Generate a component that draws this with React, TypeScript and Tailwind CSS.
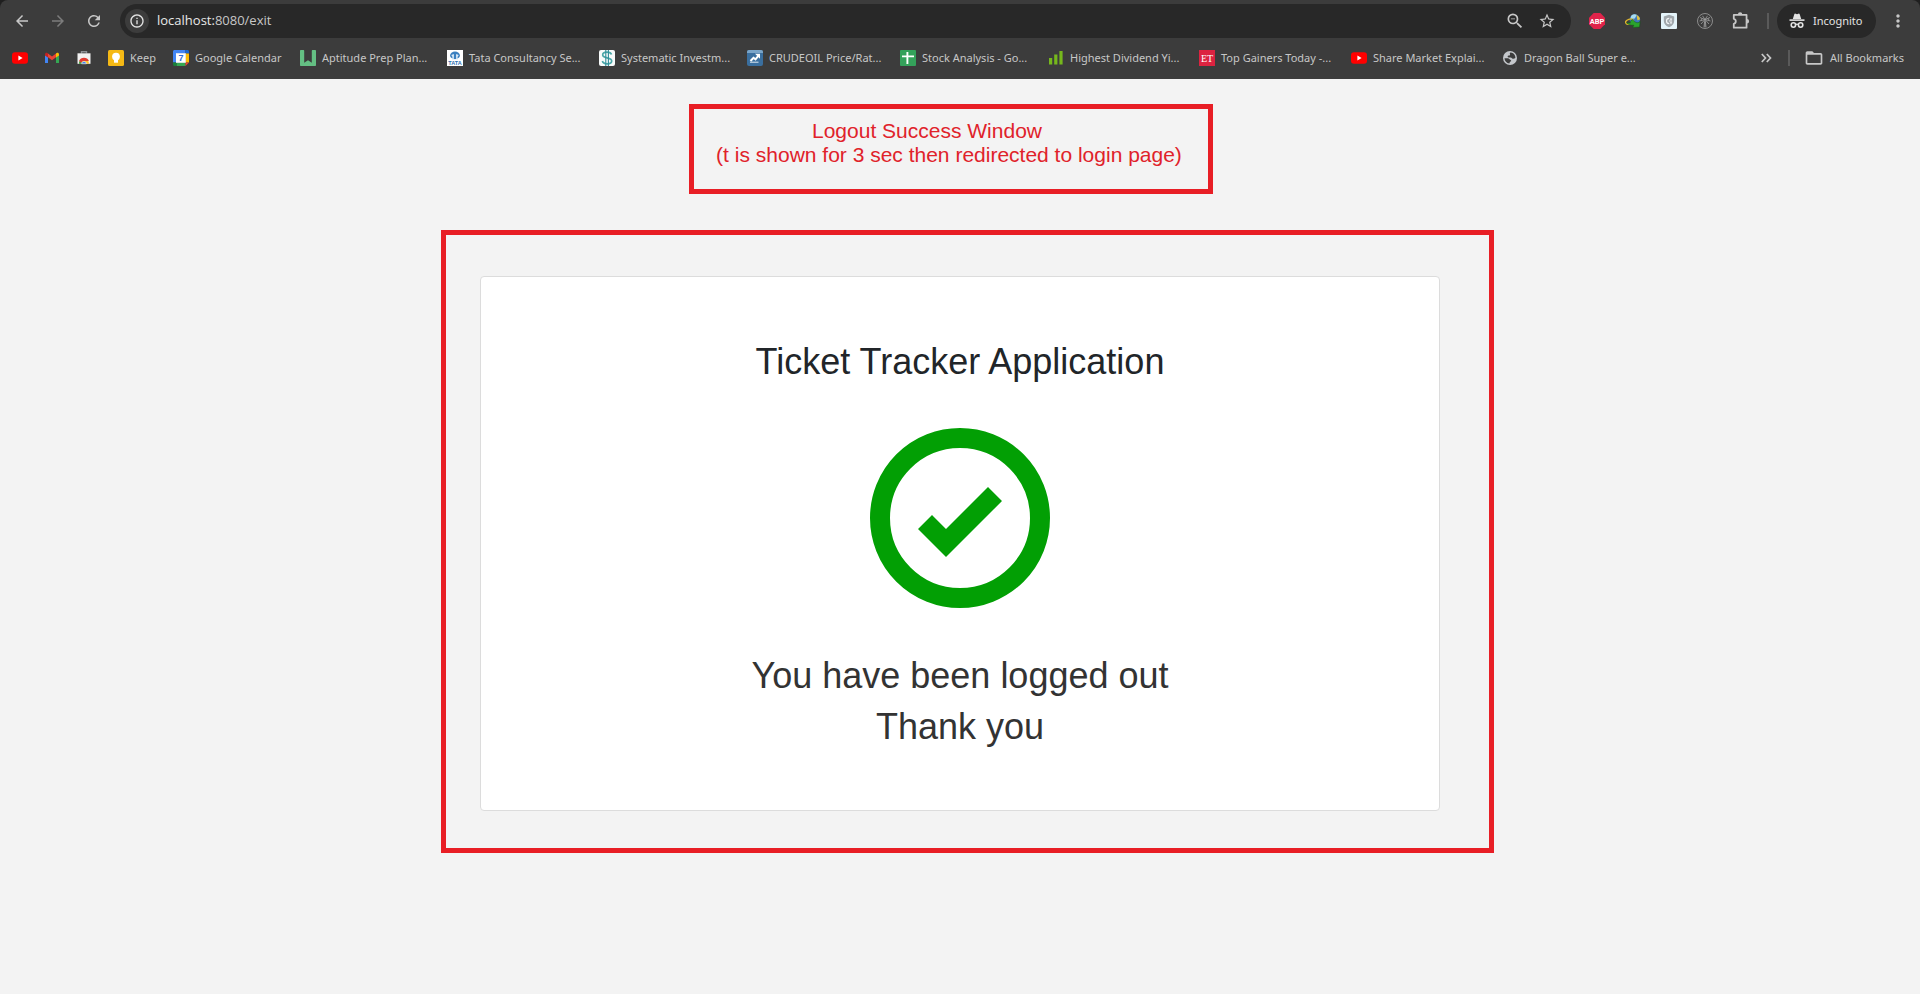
import type { ReactNode } from "react";
import {
  MdArrowBack,
  MdArrowForward,
  MdFolderOpen,
  MdInfoOutline,
  MdMoreVert,
  MdRefresh,
  MdStarBorder,
  MdZoomOut,
} from "react-icons/md";

function YouTubeIcon() {
  return (
    <svg viewBox="0 0 16 16" className="size-4 shrink-0" aria-hidden="true">
      <rect x="0" y="2.2" width="16" height="11.6" rx="3" fill="#ff0000" />
      <path d="M6.4 5.6 10.6 8l-4.2 2.4z" fill="#fff" />
    </svg>
  );
}

function GmailIcon() {
  return (
    <svg viewBox="0 0 16 16" className="size-4 shrink-0" aria-hidden="true">
      <path d="M1 4.6V13h3V7.2z" fill="#4285f4" />
      <path d="M12 7.2V13h3V4.6z" fill="#34a853" />
      <path d="M4 3.4v3.9l4 3 4-3V3.4l-4 3z" fill="#ea4335" />
      <path d="M1 4.4v1L4 7.6V3.4l-.6-.4C2.3 2.3 1 3 1 4.4z" fill="#c5221f" />
      <path d="M15 4.4v1l-3 2.2V3.400l.6-.4c1.100-.7 2.400 0 2.400 1.400z" fill="#fbbc04" />
    </svg>
  );
}

function WebStoreIcon() {
  return (
    <svg viewBox="0 0 16 16" className="size-4 shrink-0" aria-hidden="true">
      <path d="M5.500 3.500V1.700h5v1.800" fill="none" stroke="#8d9196" strokeWidth="1.400" />
      <path d="M1.500 3.300h13v10.500h-13z" fill="#f1f1f1" />
      <path d="M3 13.800a5 5 0 0 1 10 0z" fill="#fbc02d" />
      <path d="M3 13.800A5 5 0 0 1 4 10.400l2.500 3.400z" fill="#2e9e4f" />
      <path d="M3.100 11A5.300 5.300 0 0 1 12.900 11H8c-1.800 0-2.600 1.200-2.600 2z" fill="#df3b32" />
      <path d="M5.600 13.800a2.400 2.400 0 0 1 4.800 0z" fill="#3f7fe8" stroke="#fff" strokeWidth=".5" />
    </svg>
  );
}

function KeepIcon() {
  return (
    <svg viewBox="0 0 16 16" className="size-4 shrink-0" aria-hidden="true">
      <rect width="16" height="16" rx="1.500" fill="#f5b915" />
      <circle cx="8" cy="6.600" r="3.900" fill="#fff" />
      <path d="M6 9.500h4v3.200H6z" fill="#fff" />
    </svg>
  );
}

function CalendarIcon() {
  return (
    <svg viewBox="0 0 16 16" className="size-4 shrink-0" aria-hidden="true">
      <path d="M1.500 0h11v3.500H3.500v9H0V1.500C0 .7.7 0 1.500 0z" fill="#4285f4" />
      <path d="M12.500 0h2C15.300 0 16 .7 16 1.500v2h-3.500z" fill="#1967d2" />
      <path d="M12.500 3.500H16v9h-3.500z" fill="#fbbc04" />
      <path d="M3.500 12.500h9V16h-9z" fill="#34a853" />
      <path d="M0 12.500h3.500V16h-2C.7 16 0 15.300 0 14.500z" fill="#188038" />
      <path d="M12.500 12.500H16L12.500 16z" fill="#ea4335" />
      <path d="M3 3.200h9.800v9.600H3z" fill="#fff" />
      <text x="8" y="11.200" textAnchor="middle" fontSize="9" fontWeight="700" fontFamily="Liberation Sans, sans-serif" fill="#2c6bd8">
        7
      </text>
    </svg>
  );
}

function PrepIcon() {
  return (
    <svg viewBox="0 0 16 16" className="size-4 shrink-0" aria-hidden="true">
      <path
        d="M1 0h2.200c.6 0 1 .4 1 1v11.700L8 10.200l3.800 2.500V1c0-.6.4-1 1-1H15c.6 0 1 .4 1 1v14c0 .6-.4 1-1 1H1c-.6 0-1-.4-1-1V1c0-.6.4-1 1-1z"
        fill="#64bf83"
      />
    </svg>
  );
}

function TataIcon() {
  return (
    <svg viewBox="0 0 16 16" className="size-4 shrink-0" aria-hidden="true">
      <rect width="16" height="16" fill="#fff" />
      <ellipse cx="8" cy="5.400" rx="4.900" ry="3.800" fill="#3a7fc0" />
      <path d="M4.200 5.200c1.300-.9 2.300-1 2.800-.9l-.2 5.100H5c.8-1.500.6-3.200-.8-4.200zM11.800 5.200c-1.300-.9-2.300-1-2.800-.9l.2 5.100H11c-.8-1.500-.6-3.200.8-4.200z" fill="#d8e8f6" />
      <text x="8" y="14.800" textAnchor="middle" fontSize="5.500" fontWeight="700" fontFamily="Liberation Sans, sans-serif" fill="#2b6fb3">
        TATA
      </text>
    </svg>
  );
}

function DollarIcon() {
  return (
    <svg viewBox="0 0 16 16" className="size-4 shrink-0" aria-hidden="true">
      <rect width="16" height="16" rx="2" fill="#f7fafa" />
      <path d="M12.500 4.500C12 2.800 10 2.200 8 2.200c-2.400 0-4.300 1-4.300 2.800C3.700 8.800 12.700 7 12.700 11c0 1.800-2 2.800-4.500 2.800-2.400 0-4.400-.9-4.800-2.800" fill="none" stroke="#4aa7a8" strokeWidth="1.700" />
      <path d="M6.800 0v16M9.400 0v16" stroke="#2f8c99" strokeWidth="1.100" />
    </svg>
  );
}

function TrendIcon() {
  return (
    <svg viewBox="0 0 16 16" className="size-4 shrink-0" aria-hidden="true">
      <rect width="16" height="16" rx="2" fill="#3a6f9f" />
      <path d="M2 0h12a2 2 0 0 1 2 2v1H0V2a2 2 0 0 1 2-2z" fill="#7aa5c9" />
      <path d="m3.500 11 3-3.200 2 1.500 3-3.600" fill="none" stroke="#fff" strokeWidth="2" />
      <path d="M8 3.800h5v5z" fill="#fff" />
      <path d="M3 12.200h8.500" stroke="#dce8f2" strokeWidth="1" />
    </svg>
  );
}

function SheetIcon() {
  return (
    <svg viewBox="0 0 16 16" className="size-4 shrink-0" aria-hidden="true">
      <rect width="16" height="16" rx="1" fill="#34a15a" />
      <path d="M7.400 2v12M2 6.400h12" stroke="#fff" strokeWidth="1.900" />
    </svg>
  );
}

function BarsIcon() {
  return (
    <svg viewBox="0 0 16 16" className="size-4 shrink-0" aria-hidden="true">
      <path d="M1 8h3.200v6.500H1zM6.200 4.500h3.200v10H6.200zM11.400 1h3.200v13.500h-3.200z" fill="#76b81c" />
    </svg>
  );
}

function EtIcon() {
  return (
    <svg viewBox="0 0 16 16" className="size-4 shrink-0" aria-hidden="true">
      <rect width="16" height="16" fill="#dc2340" />
      <text x="8" y="11.700" textAnchor="middle" fontSize="10" fontFamily="Liberation Serif, serif" fill="#fff">
        ET
      </text>
    </svg>
  );
}

function GlobeIcon() {
  return (
    <svg viewBox="0 0 16 16" className="size-4 shrink-0" aria-hidden="true">
      <circle cx="8" cy="8" r="7" fill="#c4c7cb" />
      <path d="M8.600 2.500c1.800.2 3.300 1 4.200 2.700.4.900.6 1.800.6 2.800-1 .5-1.600.9-2.600.7-1-.2-1.100-1.200-2.100-1.300H6.500c-1.200-.3-1.200-1.700.3-1.800 1 0 1.500-.7 1.200-1.300-.4-.7-.2-1.500.6-1.800z" fill="#3c3c3c" />
      <path d="M2.500 8.200h3.300c1.500.1 1.700 1.300 2.800 1.700.9.400.7 1.400 0 1.700-.9.400-.8 1.200-1.200 1.900-2.800-.4-4.800-2.500-4.900-5.300z" fill="#3c3c3c" />
    </svg>
  );
}

function AbpIcon() {
  return (
    <svg viewBox="0 0 16 16" className="size-4" aria-hidden="true">
      <path d="M4.700 0h6.600L16 4.700v6.600L11.300 16H4.700L0 11.300V4.700z" fill="#e0234a" />
      <text x="8" y="10.700" textAnchor="middle" fontSize="7.500" fontWeight="700" fontFamily="Roboto, sans-serif" fill="#fff">
        ABP
      </text>
    </svg>
  );
}

function DownloadManagerIcon() {
  return (
    <svg viewBox="0 0 16 16" className="size-4" aria-hidden="true">
      <circle cx="9.800" cy="6.600" r="5.300" fill="#3e78bd" />
      <path d="M6.200 2.700a5.300 5.300 0 0 1 5.600-1L9.800 5.400 5.500 6z" fill="#a6dcf2" />
      <path d="M11.500 2c2 .9 3.400 2.600 3.500 4.300l-2.500 1.200z" fill="#e3c33c" />
      <ellipse cx="4.500" cy="8.600" rx="4" ry="2.400" transform="rotate(-18 4.500 8.600)" fill="none" stroke="#e0b52c" strokeWidth="1.400" />
      <path d="M1.500 9.800c1.500 1.500 4.500 2.800 7.400 2.400L7.600 14.400l6.900-.3.700-5.600-2.200 1.300C10.500 9.600 8.500 8 7.600 6.500 5.500 7.500 5 9 5.500 10z" fill="#2ba32d" stroke="#14541a" strokeWidth=".5" />
    </svg>
  );
}

function ShieldIcon() {
  return (
    <svg viewBox="0 0 16 16" className="size-4" aria-hidden="true">
      <rect width="16" height="16" rx="1" fill="#e4f4fa" />
      <path d="M8 1.800 13.200 3.400v4.300c0 3.200-2.200 5.300-5.200 6.600-3-1.300-5.200-3.400-5.200-6.600V3.400z" fill="#a0a7ac" />
      <path d="M8.200 5.300a2.700 2.700 0 1 0 0 5.400M8 8h3M9 6.200h2M9 9.800h2" fill="none" stroke="#f2f5f6" strokeWidth="1.200" />
    </svg>
  );
}

function PalmIcon() {
  return (
    <svg viewBox="0 0 16 16" className="size-4" aria-hidden="true" fill="none" stroke="#a0a0a0" strokeWidth=".8">
      <circle cx="8" cy="8" r="7.500" />
      <path d="M8 6.500v8M7 14.300l.6-6M9 14.300l-.6-6M8 6.500 5.500 2.800M8 6.500l2.500-3.700M8 6.500 3 4.500M8 6.500l5-2M8 6.500 2.500 8M8 6.500 13.500 8M8 6.500 4 11M8 6.500l4 4.500M4.500 5.500l-.3 2M11.500 5.500l.3 2" />
    </svg>
  );
}

function PuzzleIcon() {
  return (
    <svg viewBox="0 0 18 18" className="size-5" aria-hidden="true">
      <path d="M2.500 3.500H14v11.500H2.500v-3.500a2.300 2.300 0 0 0 0-4.500z" fill="none" stroke="#c7c7c7" strokeWidth="1.600" strokeLinejoin="round" />
      <path d="M6.200 3.200a2 2 0 0 1 4 0zM14.300 7.200a2 2 0 0 1 0 4z" fill="#c7c7c7" />
    </svg>
  );
}

function IncognitoIcon() {
  return (
    <svg viewBox="0 0 16 16" className="size-4" aria-hidden="true">
      <path d="M5.300 1.200c.2-.5.700-.7 1.200-.5L8 1.200l1.500-.5c.5-.2 1 0 1.200.5L12.200 6H3.800z" fill="#e3e3e3" />
      <path d="M.5 6.300h15v1.600H.5z" fill="#e3e3e3" />
      <circle cx="4.400" cy="12" r="2.200" fill="none" stroke="#e3e3e3" strokeWidth="1.600" />
      <circle cx="11.600" cy="12" r="2.200" fill="none" stroke="#e3e3e3" strokeWidth="1.600" />
      <path d="M6.400 11.600c1-.7 2.200-.7 3.200 0" fill="none" stroke="#e3e3e3" strokeWidth="1.300" />
    </svg>
  );
}

function OverflowIcon() {
  return (
    <svg viewBox="0 0 12 12" className="size-3" aria-hidden="true">
      <path d="m1.800 2 3.700 4-3.700 4M6.800 2l3.700 4-3.700 4" fill="none" stroke="#c7c7c7" strokeWidth="1.700" />
    </svg>
  );
}

function SuccessIcon() {
  return (
    <svg viewBox="0 0 180 180" className="size-[180px]" role="img" aria-label="Success">
      <circle cx="90" cy="90" r="80" fill="none" stroke="#029f04" strokeWidth="20" />
      <path d="M48 101 62 87l14 14 42-42 14 14-56 56z" fill="#029f04" />
    </svg>
  );
}

type Bookmark = { label: string; text?: string; icon: ReactNode; width: string };

const bookmarks: Bookmark[] = [
  { label: "YouTube", icon: <YouTubeIcon />, width: "w-8" },
  { label: "Gmail", icon: <GmailIcon />, width: "w-8" },
  { label: "Web Store", icon: <WebStoreIcon />, width: "w-8" },
  { label: "Keep", text: "Keep", icon: <KeepIcon />, width: "w-[65px]" },
  { label: "Google Calendar", text: "Google Calendar", icon: <CalendarIcon />, width: "w-[127px]" },
  { label: "Aptitude Prep", text: "Aptitude Prep Plan...", icon: <PrepIcon />, width: "w-[147px]" },
  { label: "Tata Consultancy", text: "Tata Consultancy Se...", icon: <TataIcon />, width: "w-[152px]" },
  { label: "Systematic", text: "Systematic Investm...", icon: <DollarIcon />, width: "w-[148px]" },
  { label: "Crude oil", text: "CRUDEOIL Price/Rat...", icon: <TrendIcon />, width: "w-[153px]" },
  { label: "Stock Analysis", text: "Stock Analysis - Go...", icon: <SheetIcon />, width: "w-[148px]" },
  { label: "Highest Dividend", text: "Highest Dividend Yi...", icon: <BarsIcon />, width: "w-[151px]" },
  { label: "Top Gainers", text: "Top Gainers Today -...", icon: <EtIcon />, width: "w-[152px]" },
  { label: "Share Market", text: "Share Market Explai...", icon: <YouTubeIcon />, width: "w-[151px]" },
  { label: "Dragon Ball", text: "Dragon Ball Super e...", icon: <GlobeIcon />, width: "w-[152px]" },
];

function ToolButton({ label, children }: { label: string; children: ReactNode }) {
  return (
    <button type="button" aria-label={label} className="flex h-[34px] w-9 shrink-0 items-center justify-center">
      {children}
    </button>
  );
}

function BrowserBar() {
  return (
    <header className="bg-[#1f1f1f] font-['Noto_Sans','Open_Sans',sans-serif]">
      <div className="h-[79px] rounded-t-lg bg-[#3c3c3c] pt-1 text-[#c7c7c7]">
        <div className="flex items-center px-1">
          <ToolButton label="Back">
            <MdArrowBack className="size-[18px]" />
          </ToolButton>
          <ToolButton label="Forward">
            <MdArrowForward className="size-[18px] text-[#7c7c7c]" />
          </ToolButton>
          <ToolButton label="Reload">
            <MdRefresh className="size-[18px]" />
          </ToolButton>
          <div className="ml-2 flex h-[34px] flex-1 items-center rounded-full bg-[#282828] pr-2 pl-[5px]">
            <button type="button" aria-label="Site information" className="flex size-6 items-center justify-center rounded-full bg-[#3c3c3c]">
              <MdInfoOutline className="size-4 text-[#e3e3e3]" />
            </button>
            <a href="#exit" className="ml-2 flex-1 font-['Open_Sans',sans-serif] text-[13px] text-[#c7c7c7]">
              <span className="text-[#e8e8e8]">localhost:</span>8080/exit
            </a>
            <button type="button" aria-label="Zoom" className="flex w-8 justify-center">
              <MdZoomOut className="size-5" />
            </button>
            <button type="button" aria-label="Bookmark this tab" className="flex w-8 justify-center">
              <MdStarBorder className="size-[18px]" />
            </button>
          </div>
          <div className="ml-2 flex items-center">
            <ToolButton label="Ad blocker"><AbpIcon /></ToolButton>
            <ToolButton label="Download manager"><DownloadManagerIcon /></ToolButton>
            <ToolButton label="Shield"><ShieldIcon /></ToolButton>
            <ToolButton label="Palm"><PalmIcon /></ToolButton>
            <ToolButton label="Extensions"><PuzzleIcon /></ToolButton>
          </div>
          <span className="mx-2 h-4 w-[2px] bg-[#5a5a5a]" />
          <button type="button" className="mr-1 flex h-[34px] w-[99px] items-center gap-2 rounded-full bg-[#282828] pl-3 text-[11px] text-[#e3e3e3]">
            <IncognitoIcon />
            Incognito
          </button>
          <ToolButton label="Menu">
            <MdMoreVert className="size-5" />
          </ToolButton>
        </div>
        <nav className="flex h-10 items-center pr-4 pl-3 text-[11px]">
          {bookmarks.map((b) => (
            <a key={b.label} href="#bookmark" aria-label={b.text ?? b.label} className={`flex shrink-0 items-center gap-[6px] whitespace-nowrap ${b.width}`}>
              {b.icon}
              {b.text}
            </a>
          ))}
          <button type="button" aria-label="More bookmarks" className="ml-auto">
            <OverflowIcon />
          </button>
          <span className="mr-[14px] ml-4 h-4 w-[2px] bg-[#5a5a5a]" />
          <a href="#all" className="flex items-center gap-[6px] whitespace-nowrap">
            <MdFolderOpen className="size-5" />
            All Bookmarks
          </a>
        </nav>
      </div>
    </header>
  );
}

export default function App() {
  return (
    <div className="min-h-screen bg-[#f3f3f3] font-['Liberation_Sans',Arial,sans-serif]">
      <BrowserBar />
      <main className="flex flex-col items-center pt-[25px]">
        <div className="mr-[18px] w-[524px] max-w-full border-5 border-[#e81e25] pt-[10px] pr-1 pb-[22px] text-center text-[21px] leading-6 text-[#e0222a]">
          <p className="pr-11">Logout Success Window</p>
          <p>(t is shown for 3 sec then redirected to login page)</p>
        </div>
        <div className="mt-9 ml-[15px] w-[1053px] max-w-full border-5 border-[#e81e25] pt-[41px] pr-[49px] pb-[37px] pl-[34px]">
          <section className="flex flex-col items-center rounded-[4px] border border-[#dcdcdc] bg-white pt-[63px] pb-[58px] text-center text-[36px]">
            <h1 className="leading-[43px] text-[#212529]">Ticket Tracker Application</h1>
            <div className="mt-[45px] mb-[42px]">
              <SuccessIcon />
            </div>
            <p className="leading-[51px] text-[#333333]">
              You have been logged out
              <br />
              Thank you
            </p>
          </section>
        </div>
      </main>
    </div>
  );
}
